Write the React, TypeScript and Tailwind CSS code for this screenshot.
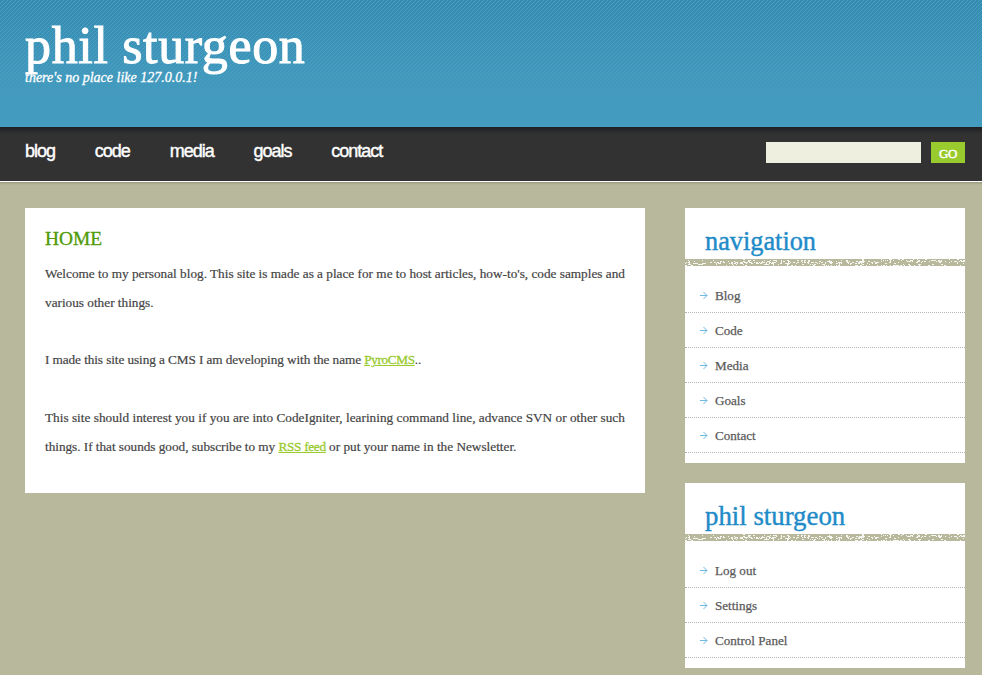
const navItems = ["blog", "code", "media", "goals", "contact"];

function buildSpecks() {
  let seed = 1234567;
  const rand = () => {
    seed = (seed * 1103515245 + 12345) % 2147483648;
    return seed / 2147483648;
  };
  let d = "";
  for (let y = 0; y < 7; y++) {
    let run = 0;
    for (let x = 0; x < 280; x++) {
      let p: number;
      if (x < 35) p = [0.02, 0.18, 0.25, 0.25, 0.25, 0.2, 0.1][y];
      else if (x < 190) p = [0.02, 0.15, 0.4, 0.6, 0.5, 0.15, 0.15][y];
      else p = [0.25, 0.38, 0.4, 0.18, 0.06, 0.1, 0.3][y];
      if (run > 0 || rand() < p * 0.6) {
        d += `M${x} ${y}h1v1h-1z`;
        run = run > 0 ? run - 1 : rand() < 0.45 ? 1 : 0;
      }
    }
  }
  return d;
}

const specks = buildSpecks();

function ChalkRule() {
  return (
    <svg width="280" height="7" viewBox="0 0 280 7" shapeRendering="crispEdges" className="block bg-[#b8b89c]">
      <path d={specks} fill="#f6f6f0" />
    </svg>
  );
}

function Arrow() {
  return (
    <svg width="8" height="8" viewBox="0 0 8 8" className="mr-[7px] block shrink-0">
      <path d="M0 4.5H7M3.5 1L7 4.5L3.5 8" fill="none" stroke="#6db9e3" strokeWidth="1" />
    </svg>
  );
}

function SideCard({ title, titleClass, items }: { title: string; titleClass: string; items: string[] }) {
  return (
    <section className="bg-white pb-[10px]">
      <h2 className={`h-[51px] pl-5 leading-[38px] text-[#218bc8] [-webkit-text-stroke:0.4px_#218bc8] ${titleClass}`}>{title}</h2>
      <ChalkRule />
      <ul className="pt-3">
        {items.map((item) => (
          <li key={item} className="flex h-[35px] items-center border-b border-dotted border-[#b5b5b5] pl-[15px]">
            <Arrow />
            <a className="pt-[2px] text-[13.1px] leading-[32px] text-[#5a5a5a] [-webkit-text-stroke:0.25px_#5a5a5a]">{item}</a>
          </li>
        ))}
      </ul>
    </section>
  );
}

function Header() {
  return (
    <header className="grid h-[127px] bg-linear-to-b from-[#348bb1] via-[#4098bd] via-60% to-[#449dc1]">
      <svg width="100%" height="127" className="col-start-1 row-start-1 block">
        <defs>
          <pattern id="stripes" width="4" height="4" patternUnits="userSpaceOnUse">
            <path d="M3 0h1v1h-1zM2 1h1v1h-1zM1 2h1v1h-1zM0 3h1v1h-1z" fill="#72bbd6" shapeRendering="crispEdges" />
          </pattern>
          <linearGradient id="fade" x1="0" y1="0" x2="0" y2="1">
            <stop offset="0" stopColor="#fff" stopOpacity="0.42" />
            <stop offset="0.5" stopColor="#fff" stopOpacity="0.24" />
            <stop offset="0.92" stopColor="#fff" stopOpacity="0" />
          </linearGradient>
          <mask id="fadeMask">
            <rect width="100%" height="127" fill="url(#fade)" />
          </mask>
        </defs>
        <rect width="100%" height="127" fill="url(#stripes)" mask="url(#fadeMask)" />
      </svg>
      <div className="col-start-1 row-start-1 pl-[25px] pt-[21px] text-white">
        <h1 className="h-[49px] text-[52px] leading-[50px] tracking-[0.65px] [-webkit-text-stroke:1px_white]">phil sturgeon</h1>
        <p className="text-[14px] leading-[15px] italic [-webkit-text-stroke:0.3px_white]">there's no place like 127.0.0.1!</p>
      </div>
    </header>
  );
}

export default function App() {
  return (
    <div className="h-[675px] overflow-hidden bg-[#b8b89c] font-['Liberation_Serif',serif]">
      <Header />
      <nav className="flex h-[55px] items-start justify-between border-b border-white bg-[linear-gradient(to_bottom,#1d1f21_0px,#323232_7px)] pl-[25px] pr-[17px]">
        <ul className="flex gap-[39.8px] pt-[13px] font-['Liberation_Sans',sans-serif] text-[18px] leading-[22px] tracking-[-1px] text-white [-webkit-text-stroke:0.4px_white]">
          {navItems.map((n) => (
            <li key={n}>{n}</li>
          ))}
        </ul>
        <form className="flex gap-[10px] pt-[15px]">
          <input className="h-[21px] w-[155px] bg-[#eeefdf] outline-none" />
          <button type="button" className="h-[21px] w-[34px] bg-[#99cb2e] pt-[2px] text-[13px] leading-[19px] tracking-[-0.5px] text-white [-webkit-text-stroke:0.4px_white]">GO</button>
        </form>
      </nav>
      <div className="h-[3px] bg-linear-to-b from-[#9c9c82] to-[#b8b89c]" />
      <div className="flex items-start justify-between pl-[25px] pr-[17px] pt-[23px]">
        <main className="h-[285px] w-[620px] bg-white px-5 pt-5 text-[13.25px] leading-[28.8px] text-[#444] [-webkit-text-stroke:0.2px_#444]">
          <h2 className="mb-[11px] text-[19.4px] leading-[21px] text-[#4f9a06] [-webkit-text-stroke:0.3px_#4f9a06]">HOME</h2>
          <p className="mb-[28.8px] whitespace-nowrap">
            Welcome to my personal blog. This site is made as a place for me to host articles, how-to's, code samples and
            <br />
            various other things.
          </p>
          <p className="mb-[28.8px] tracking-[-0.085px]">
            I made this site using a CMS I am developing with the name <a className="tracking-[-0.36px] text-[#99cb2e] underline [-webkit-text-stroke:0.3px_#99cb2e]">PyroCMS</a>..
          </p>
          <p className="whitespace-nowrap">
            <span className="tracking-[0.015px]">This site should interest you if you are into CodeIgniter, learining command line, advance SVN or other such</span>
            <br />
            <span className="tracking-[-0.03px]">things. If that sounds good, subscribe to my </span>
            <a className="tracking-[-0.3px] text-[#99cb2e] underline [-webkit-text-stroke:0.3px_#99cb2e]">RSS feed</a> or put your name in the Newsletter.
          </p>
        </main>
        <aside className="flex w-[280px] flex-col gap-5">
          <SideCard title="navigation" titleClass="pt-[15px] text-[26.3px]" items={["Blog", "Code", "Media", "Goals", "Contact"]} />
          <SideCard title="phil sturgeon" titleClass="pt-[14px] text-[26.8px]" items={["Log out", "Settings", "Control Panel"]} />
        </aside>
      </div>
    </div>
  );
}
